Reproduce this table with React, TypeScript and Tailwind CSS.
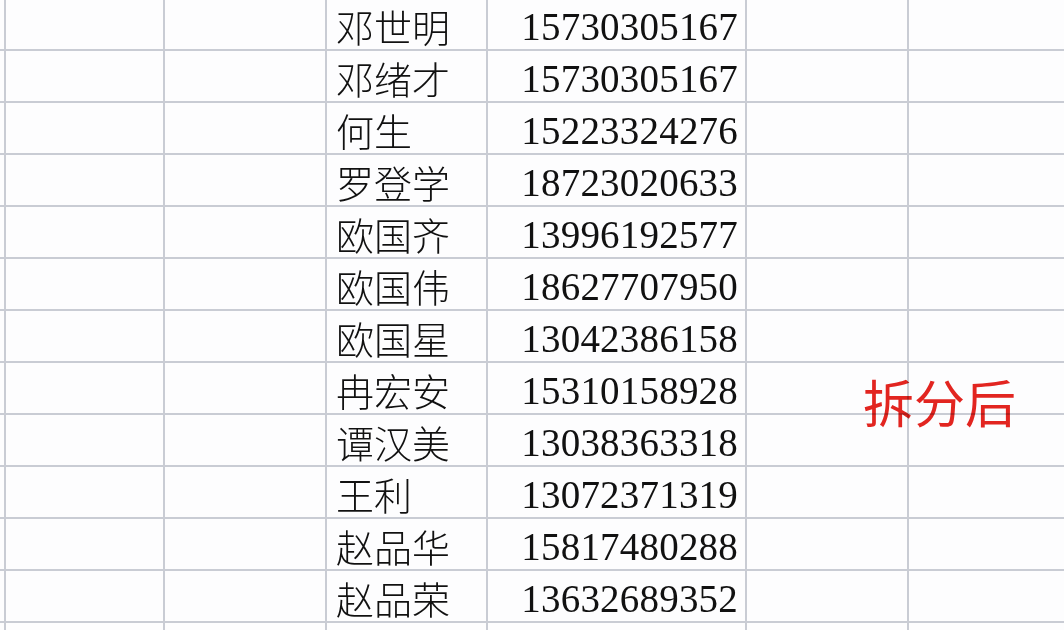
import React from "react";

const rows: [string, string][] = [
  ["邓世明", "15730305167"],
  ["邓绪才", "15730305167"],
  ["何生", "15223324276"],
  ["罗登学", "18723020633"],
  ["欧国齐", "13996192577"],
  ["欧国伟", "18627707950"],
  ["欧国星", "13042386158"],
  ["冉宏安", "15310158928"],
  ["谭汉美", "13038363318"],
  ["王利", "13072371319"],
  ["赵品华", "15817480288"],
  ["赵品荣", "13632689352"],
];

export default function App() {
  return (
    <div className="relative w-[1064px] h-[630px] overflow-hidden bg-[#fdfdfe]">
      <div className="flex flex-col">
        {rows.concat([["", ""]]).map(([name, phone], i) => (
          <div
            key={i}
            className={`flex border-b-2 border-[#c9ccd4] ${i === 0 ? "h-[51px]" : "h-[52px]"}`}
          >
            <div className="w-[4px] shrink-0" />
            <div className="w-[159px] shrink-0 border-l-2 border-[#c9ccd4]" />
            <div className="w-[162px] shrink-0 border-l-2 border-[#c9ccd4]" />
            <div
              className={`w-[161px] shrink-0 border-l-2 border-[#c9ccd4] pl-[9px] flex items-center text-[38px] leading-none text-[#111] font-light ${i === 0 ? "pt-[2px]" : "pt-[3px]"}`}
              style={{ fontFamily: '"Noto Sans CJK SC", sans-serif' }}
            >
              {name}
            </div>
            <div
              className={`w-[259px] shrink-0 border-l-2 border-[#c9ccd4] pr-[7px] flex items-center justify-end text-[39px] leading-none text-[#111] tracking-[0.2px] ${i === 0 ? "pt-[4px]" : "pt-[5px]"}`}
              style={{ fontFamily: '"Liberation Serif", serif' }}
            >
              {phone}
            </div>
            <div className="w-[162px] shrink-0 border-l-2 border-[#c9ccd4]" />
            <div className="flex-1 border-l-2 border-[#c9ccd4]" />
          </div>
        ))}
      </div>
      <div
        className="absolute left-[863px] top-[376px] text-[51px] leading-none text-[#e42520] mix-blend-multiply"
        style={{ fontFamily: '"Noto Sans CJK SC", sans-serif' }}
      >
        拆分后
      </div>
    </div>
  );
}
